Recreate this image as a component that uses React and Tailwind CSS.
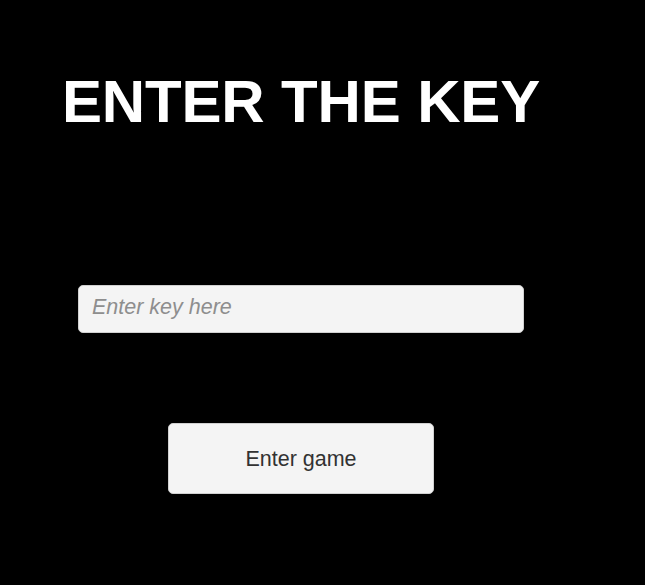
export default function App() {
  return (
    <div className="w-[645px] h-[585px] bg-black overflow-hidden">
      <div className="w-[602px] flex flex-col items-center pt-[72px] font-['Liberation_Sans',Arial,sans-serif]">
        <h1 className="text-[60px] leading-[60px] font-bold text-white tracking-[-0.15px] h-[60px] whitespace-nowrap">
          ENTER THE KEY
        </h1>
        <div className="mt-[153px] w-[446px] h-[48px] rounded-[5px] bg-[#f4f4f4] border border-[#d0d0d0] flex items-center pl-[13px] pb-[4px]">
          <input
            className="w-full bg-transparent outline-none italic text-[21.5px] text-[#333] placeholder:text-[#8e8e8e] font-['Liberation_Sans',Arial,sans-serif]"
            placeholder="Enter key here"
          />
        </div>
        <button className="mt-[90px] w-[266px] h-[71px] rounded-[5px] bg-[#f4f4f4] border border-[#d0d0d0] text-[21.5px] text-[#323232] flex items-center justify-center pt-[1px] font-['Liberation_Sans',Arial,sans-serif]">
          Enter game
        </button>
      </div>
    </div>
  );
}
